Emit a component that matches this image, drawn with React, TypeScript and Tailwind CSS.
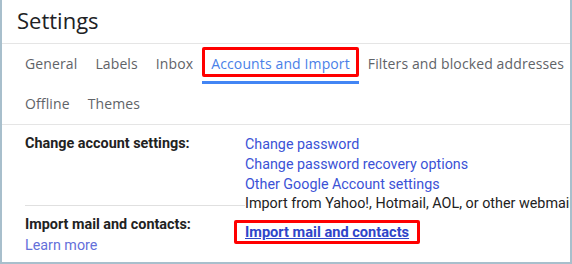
const tabsTop = ["General", "Labels", "Inbox", "Accounts and Import", "Filters and blocked addresses"];
const tabsBottom = ["Offline", "Themes"];

const links = [
  "Change password",
  "Change password recovery options",
  "Other Google Account settings",
];

function Tab({ label, active }: { label: string; active?: boolean }) {
  return (
    <div
      className={
        "relative flex h-[40px] items-center px-[9px] pb-[2px] whitespace-nowrap " +
        (active ? "text-[#4a7fe8]" : "text-[#5f6368]")
      }
    >
      {label}
      {active && (
        <>
          <div className="absolute bottom-[7px] left-0 right-0 top-[3px] rounded-[2px] border-[3px] border-[#ff0000]" />
          <div className="absolute bottom-0 left-0 right-0 h-[3px] bg-[#4285f4]" />
        </>
      )}
    </div>
  );
}

export default function App() {
  return (
    <div className="h-[264px] w-[572px] overflow-hidden border-x-2 border-b-2 border-[#a8bfcc] bg-white font-['Roboto',sans-serif]">
      {/* Header */}
      <div className="flex h-[44px] items-center border-b border-[#e5e5e5] pl-[15px]">
        <h1 className="pb-[2px] font-['Open_Sans',sans-serif] text-[22px] text-[#202124]">Settings</h1>
      </div>

      {/* Tabs */}
      <div className="border-b border-[#e5e5e5] pl-[14px] font-['Open_Sans',sans-serif] text-[14px] font-medium tracking-[0.12px]">
        <div className="flex">
          {tabsTop.map((t) => (
            <Tab key={t} label={t} active={t === "Accounts and Import"} />
          ))}
        </div>
        <div className="flex">
          {tabsBottom.map((t) => (
            <Tab key={t} label={t} />
          ))}
        </div>
      </div>

      {/* Accounts content */}
      <div className="flex pl-[23px] text-[14.3px] leading-[20px]">
        <div className="w-[220px] shrink-0">
          <div className="h-[81px] border-b border-[#e0e0e0] pt-[9px] text-[14.4px] font-bold text-[#222]">
            Change account settings:
          </div>
          <div className="pt-[8px] text-[14.4px] font-bold leading-[21px] text-[#222]">
            Import mail and contacts:
          </div>
          <div className="leading-[21px] text-[#6470da]">Learn more</div>
        </div>
        <div className="pt-[9px] whitespace-nowrap">
          {links.map((l) => (
            <div key={l} className="text-[#3b52d6]">
              {l}
            </div>
          ))}
          <div className="text-[14.35px] text-[#222]">Import from Yahoo!, Hotmail, AOL, or other webmail</div>
          <div className="-ml-[11px] mt-[6px] inline-block rounded-[2px] border-[3px] border-[#ff0000] px-[8px] leading-[18px]">
            <span className="text-[14.6px] font-bold text-[#2f45c9] underline">Import mail and contacts</span>
          </div>
        </div>
      </div>
    </div>
  );
}
